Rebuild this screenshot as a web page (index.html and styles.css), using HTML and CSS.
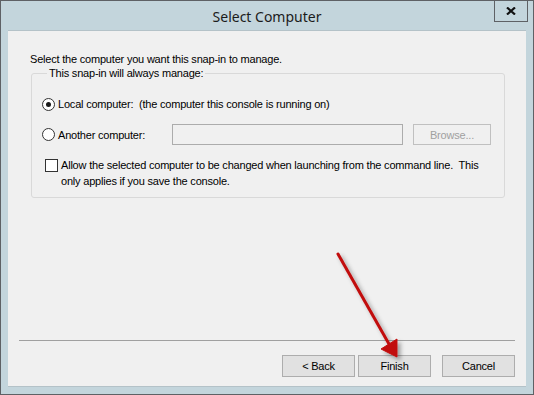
FILE: index.html
```html
<!DOCTYPE html>
<html lang="en">
<head>
  <meta charset="UTF-8">
  <title>Select Computer</title>
  <link rel="stylesheet" href="styles.css">
</head>
<body>

  <div class="window">
    <div class="titlebar">
      <span class="title">Select Computer</span>
      <span class="close">
        <svg width="10" height="8" viewBox="0 0 10 8">
          <path d="M1 0.5 L9 7.5 M9 0.5 L1 7.5" stroke="#111" stroke-width="2.2"/>
        </svg>
      </span>
    </div>

    <div class="client">
      <p class="intro">Select the computer you want this snap-in to manage.</p>

      <fieldset class="group">
        <legend>This snap-in will always manage:</legend>

        <label class="row">
          <input type="radio" name="target" checked>
          <span>Local computer:&nbsp; (the computer this console is running on)</span>
        </label>

        <div class="row another">
          <label class="another-label">
            <input type="radio" name="target">
            <span>Another computer:</span>
          </label>
          <input type="text" class="field" disabled>
          <button class="btn disabled" disabled>Browse...</button>
        </div>

        <label class="check-row">
          <input type="checkbox">
          <span>Allow the selected computer to be changed when launching from the command line.&nbsp; This only applies if you save the console.</span>
        </label>
      </fieldset>

      <div class="spacer"></div>

      <div class="separator"></div>

      <div class="footer">
        <button class="btn">&lt; Back</button>
        <button class="btn">Finish</button>
        <button class="btn cancel">Cancel</button>
      </div>
    </div>

    <!-- red annotation arrow -->
    <svg class="arrow" width="534" height="395" viewBox="0 0 534 395">
      <defs>
        <filter id="shadow" x="-20%" y="-20%" width="140%" height="140%">
          <feDropShadow dx="3" dy="3" stdDeviation="2" flood-color="#000" flood-opacity="0.35"/>
        </filter>
      </defs>
      <g filter="url(#shadow)" fill="#c10f0f" stroke="#c10f0f">
        <line x1="338" y1="254" x2="389" y2="344" stroke-width="3" stroke-linecap="round"/>
        <polygon points="381,349 397,339 397,357" stroke-width="1" stroke-linejoin="round"/>
      </g>
    </svg>
  </div>

</body>
</html>
```

FILE: styles.css
```css
* {
  margin: 0;
  padding: 0;
  box-sizing: border-box;
}

body {
  font-family: "Liberation Sans", Arial, sans-serif;
  font-size: 11px;
  letter-spacing: -0.2px;
  color: #000;
  background: #c3d5dc;
}

.window {
  position: relative;
  width: 534px;
  height: 395px;
  border: 1px solid #5e6165;
  background: #c3d5dc;
  display: flex;
  flex-direction: column;
}

.titlebar {
  height: 29px;
  position: relative;
  display: flex;
  justify-content: center;
  align-items: center;
}

.title {
  font-family: "Noto Sans", "Open Sans", sans-serif;
  font-size: 14px;
  letter-spacing: 0;
  color: #1b1b1b;
  padding-top: 1px;
}

.close {
  position: absolute;
  top: -1px;
  right: 5px;
  width: 34px;
  height: 22px;
  border: 1px solid #5e6165;
  display: flex;
  justify-content: center;
  align-items: center;
}

.client {
  height: 357px;
  margin: 0 7px;
  background: #f0f0f0;
  border-top: 1px solid #b4c2c8;
  border-bottom: 1px solid #b4c2c8;
  padding: 22px 10px 9px 22px;
  display: flex;
  flex-direction: column;
}

.intro {
  line-height: 13px;
}

.group {
  margin: 1px 11px 0 1px;
  border: 1px solid #d9d9d9;
  border-radius: 3px;
  padding: 14px 12px 8px 10px;
  min-width: 0;
}

.group legend {
  padding: 0 2px;
  margin-left: 5px;
  line-height: 13px;
}

.row {
  display: flex;
  align-items: center;
  height: 20px;
  gap: 3px;
}

.another {
  height: 21px;
  margin-top: 10px;
  gap: 0;
}

.another-label {
  display: flex;
  align-items: center;
  gap: 3px;
  flex: none;
  width: 130px;
}

input[type="radio"] {
  appearance: none;
  flex: none;
  width: 13px;
  height: 13px;
  border: 1px solid #333;
  border-radius: 50%;
  background: #fff;
  display: flex;
  justify-content: center;
  align-items: center;
}

input[type="radio"]:checked::after {
  content: "";
  width: 5px;
  height: 5px;
  border-radius: 50%;
  background: #1a1a1a;
}

.field {
  flex: none;
  width: 231px;
  height: 21px;
  border: 1px solid #acacac;
  background: #f0f0f0;
}

.btn {
  flex: none;
  width: 73px;
  height: 22px;
  border: 1px solid #adadad;
  background: #e1e1e1;
  font-family: "Liberation Sans", Arial, sans-serif;
  font-size: 11px;
  letter-spacing: -0.2px;
  color: #000;
}

.btn.disabled {
  width: 78px;
  height: 21px;
  margin-left: 10px;
  background: #f0f0f0;
  border-color: #c0c0c0;
  color: #a0a0a0;
}

.check-row {
  display: flex;
  align-items: flex-start;
  gap: 3px;
  margin-top: 12px;
  padding-left: 3px;
  line-height: 16px;
}

input[type="checkbox"] {
  appearance: none;
  flex: none;
  width: 13px;
  height: 13px;
  margin-top: 2px;
  border: 1px solid #333;
  background: #fff;
}

.spacer {
  flex: 1;
}

.separator {
  height: 1px;
  margin: 0 1px 0 -11px;
  background: #a0a0a0;
}

.footer {
  display: flex;
  justify-content: flex-end;
  gap: 3px;
  margin-top: 14px;
  margin-right: 1px;
}

.footer .cancel {
  margin-left: 8px;
}

.arrow {
  position: absolute;
  left: -1px;
  top: -1px;
  pointer-events: none;
}
```
